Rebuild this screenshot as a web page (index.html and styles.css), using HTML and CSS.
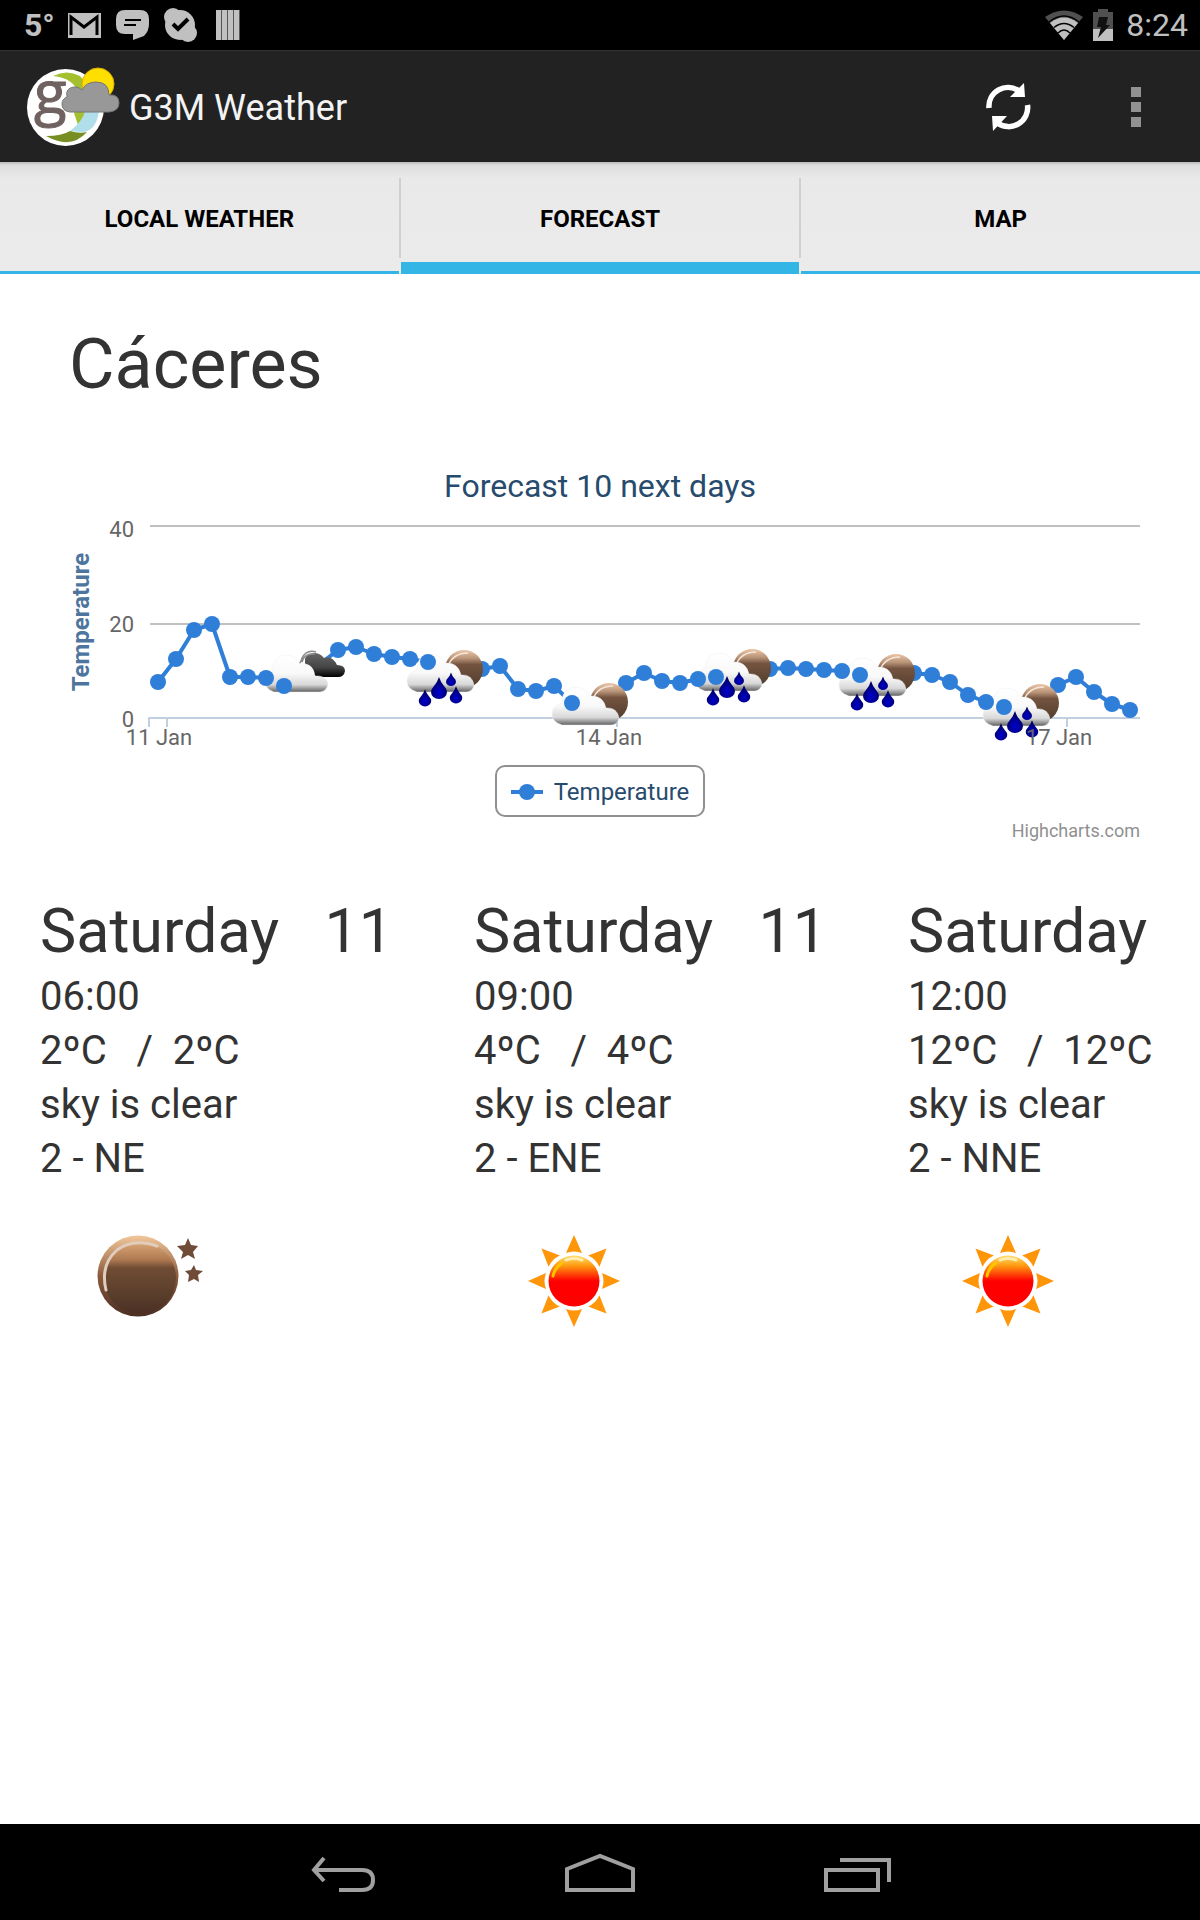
FILE: index.html
```html
<!DOCTYPE html>
<html lang="en">
<head>
<meta charset="utf-8">
<meta name="viewport" content="width=device-width, initial-scale=1">
<title>G3M Weather</title>
<link rel="stylesheet" href="styles.css">
</head>
<body>
<div class="status-bar">
  <div class="status-left">
    <span class="status-temp">5°</span>
    <svg class="status-icon" width="34" height="34" viewBox="0 0 34 34" aria-hidden="true">
      <path fill="#c0c0c0" d="M1 5h33v25H1z"/>
      <path fill="none" stroke="#000" stroke-width="3" d="M4 27V9l13 10L30 9v18"/>
    </svg>
    <svg class="status-icon" width="34" height="34" viewBox="0 0 34 34" aria-hidden="true">
      <path fill="#c0c0c0" d="M10 2h15q9 0 9 9v5q0 7-5 12l-11 4v-6h-8q-9 0-9-9v-6q0-9 9-9z"/>
      <path stroke="#000" stroke-width="2" d="M10 12h16M9 17h12"/>
    </svg>
    <svg class="status-icon" width="34" height="34" viewBox="0 0 34 34" aria-hidden="true">
      <circle cx="17" cy="17" r="15" fill="#c0c0c0"/>
      <circle cx="10" cy="9" r="9" fill="#c0c0c0"/>
      <circle cx="25" cy="25" r="9" fill="#c0c0c0"/>
      <path fill="none" stroke="#000" stroke-width="4" d="M10 16l5 5 10-10"/>
    </svg>
    <svg class="status-icon" width="34" height="34" viewBox="0 0 34 34" aria-hidden="true">
      <path fill="#c0c0c0" d="M5 2h24v30H5z"/>
      <path stroke="#555" stroke-width="1" d="M10.500 2v30M16.500 2v30M22.500 2v30M28.500 2v30"/>
    </svg>
  </div>
  <div class="status-right">
    <svg width="40" height="32" viewBox="0 0 40 32" aria-hidden="true">
      <path fill="#505050" d="M1 8Q20-5 39 8L20 31z"/>
      <path fill="#c0c0c0" d="M6 14q14-11 28 0L20 31z"/>
      <path fill="none" stroke="#000" stroke-width="1.500" d="M5 13q15-12 30 0M10 18.500q10-8 20 0M14 24q6-6 12 0"/>
    </svg>
    <svg width="22" height="32" viewBox="0 0 22 32" aria-hidden="true">
      <path fill="#505050" d="M6 0h10v3h5v17H1V3h5z"/>
      <path fill="#c0c0c0" d="M1 20h20v12H1z"/>
      <path fill="#111" d="M7 8h9l-2 8h4L6 29l3-11H5z"/>
    </svg>
    <span class="clock">8:24</span>
  </div>
</div>

<header class="action-bar">
  <svg class="logo" width="94" height="80" viewBox="26 66 94 80" aria-hidden="true">
    <circle cx="65.500" cy="106.500" r="38.500" fill="#fff"/>
    <path fill="#a4c02f" d="M53 75q14-7 27 0l14 17-5 20-11 12-4-12q9-8 6-18-6-17-27-19z"/>
    <path fill="#b1deeb" d="M85 110h14q-3 22-19 21l-10-1q13-10 15-20z"/>
    <path fill="#768e22" d="M46 135q16 0 24-5 9 3 17 1-16 18-41 4z"/>
    <text class="logo-letter" x="34" y="113">g</text>
    <circle cx="98" cy="83" r="16" fill="#ffdf00" stroke="#d9b000"/>
    <path fill="#989898" stroke="#777" d="M70 111q-8-1-8-8 0-5 5-7-2-9 7-10 4-1 8 3 4-8 14-8 13 0 13 13 10-1 10 8 0 8-10 9z"/>
  </svg>
  <h1 class="app-title">G3M Weather</h1>
  <div class="actions">
    <button class="action" type="button" aria-label="Refresh">
      <svg width="48" height="52" viewBox="984 81 48 52" aria-hidden="true">
        <path fill="none" stroke="#fff" stroke-width="5.500" d="M989 108a19 19 0 0 1 30-17M1027.500 105a19 19 0 0 1-30 18"/>
        <path fill="#fff" d="M1024 83l1 14h-15zM992 116h15l-14 15z"/>
      </svg>
    </button>
    <button class="action" type="button" aria-label="More options">
      <svg width="10" height="40" viewBox="0 0 10 40" aria-hidden="true"><path fill="#929292" d="M0 0h10v10H0zM0 15h10v10H0zM0 30h10v10H0z"/></svg>
    </button>
  </div>
</header>

<nav class="tabs">
  <a class="tab" href="#local">LOCAL WEATHER</a>
  <span class="tab-divider"></span>
  <a class="tab tab-selected" href="#forecast" aria-current="page">FORECAST</a>
  <span class="tab-divider"></span>
  <a class="tab" href="#map">MAP</a>
</nav>

<main class="content">
  <h2 class="city">Cáceres</h2>

  <section class="chart">
    <h3 class="chart-title">Forecast 10 next days</h3>
    <svg class="plot" viewBox="0 506 1200 246" role="img" aria-label="Temperature forecast">
      <defs>
        <linearGradient id="cloudFill" x1="0" y1="0" x2="0" y2="1">
          <stop offset="0" stop-color="#fff"/><stop offset=".5" stop-color="#f9f9f9"/>
          <stop offset=".8" stop-color="#d8d8d8"/><stop offset="1" stop-color="#606060"/>
        </linearGradient>
        <linearGradient id="darkFill" x1="0" y1="0" x2="0" y2="1">
          <stop offset="0" stop-color="#666"/><stop offset=".6" stop-color="#444"/><stop offset="1" stop-color="#000"/>
        </linearGradient>
        <linearGradient id="moonFill" x1="0" y1="0" x2="0" y2="1">
          <stop offset="0" stop-color="#edc6a8"/><stop offset=".22" stop-color="#b89478"/>
          <stop offset=".38" stop-color="#745440"/><stop offset="1" stop-color="#4f3b2c"/>
        </linearGradient>
        <radialGradient id="dropFill" cx=".5" cy=".7" r=".6">
          <stop offset="0" stop-color="#0000d0"/><stop offset="1" stop-color="#000060"/>
        </radialGradient>
        <path id="drop" fill="url(#dropFill)" d="M0-1q2 6 5 9 3 3 3 6a8 7 0 0 1-16 0q0-3 3-6 3-3 5-9z"/>
        <g id="moonCloud">
          <circle cx="58" cy="22" r="19" fill="url(#moonFill)"/>
          <path fill="none" stroke="#f5e6da" stroke-width="1.500" d="M42 19q5-13 20-13"/>
          <path fill="url(#cloudFill)" stroke="#eee" stroke-width=".5" d="M11 45Q1 42 1 34q0-8 10-11 0-16 14-16 9 0 14 9 13-1 16 12 11-1 13 10-1 6-7 7z"/>
        </g>
        <g id="rainCloud">
          <use href="#moonCloud" y="-1"/>
          <use href="#drop" transform="translate(33 30)"/>
          <use href="#drop" transform="translate(45 25) scale(.62)"/>
          <use href="#drop" transform="translate(19 42) scale(.78)"/>
          <use href="#drop" transform="translate(50 39) scale(.78)"/>
        </g>
        <g id="darkCloud">
          <path fill="url(#darkFill)" d="M48 27q-8-8-7-16 1-5 9-6 6 0 10 5 8-3 13 7 8 0 8 6-1 6-7 6H56z"/>
          <path fill="none" stroke="#888" stroke-width="1.500" d="M34 16q3-1 4-6 5-9 14-6M38 14q2-9 13-8"/>
          <path fill="url(#cloudFill)" stroke="#eee" stroke-width=".5" d="M10 44Q1 41 1 33q0-8 7-11 2-15 14-15 10 0 14 9 13-2 15 12 11-1 13 8-1 7-8 8z"/>
        </g>
      </defs>
      <path class="grid-line" d="M150 526h990M150 624h990"/>
      <path class="axis-line" d="M148 718h992M149 718v9M167 718v9M617 718v9M1067 718v9"/>
      <polyline class="series" points="158,682 176,659 194,630 212,624 230,677 248,677 266,678 284,686 302,672 320,664 338,650 356,647 374,654 392,657 410,659 428,662 446,673 464,672 482,669 500,666 518,689 536,691 554,686 572,703 590,706 608,699 626,683 644,673 662,681 680,683 698,679 716,677 734,672 752,670 770,669 788,668 806,669 824,670 842,671 860,675 878,677 896,674 914,673 932,675 950,682 968,695 986,702 1004,707 1022,708 1040,697 1058,685 1076,677 1094,692 1112,704 1130,710"/>
      <g class="points">
        <circle cx="1130" cy="710" r="8"/><circle cx="1112" cy="704" r="8"/><circle cx="1094" cy="692" r="8"/><circle cx="1076" cy="677" r="8"/><circle cx="1058" cy="685" r="8"/>
        <use href="#rainCloud" x="982" y="682"/>
        <circle cx="1004" cy="707" r="8"/><circle cx="986" cy="702" r="8"/><circle cx="968" cy="695" r="8"/><circle cx="950" cy="682" r="8"/><circle cx="932" cy="675" r="8"/><circle cx="914" cy="673" r="8"/>
        <use href="#rainCloud" x="838" y="652"/>
        <circle cx="860" cy="675" r="8"/><circle cx="842" cy="671" r="8"/><circle cx="824" cy="670" r="8"/><circle cx="806" cy="669" r="8"/><circle cx="788" cy="668" r="8"/><circle cx="770" cy="669" r="8"/>
        <use href="#rainCloud" x="694" y="647"/>
        <circle cx="716" cy="677" r="8"/><circle cx="698" cy="679" r="8"/><circle cx="680" cy="683" r="8"/><circle cx="662" cy="681" r="8"/><circle cx="644" cy="673" r="8"/><circle cx="626" cy="683" r="8"/>
        <use href="#moonCloud" x="551" y="680"/>
        <circle cx="572" cy="703" r="8"/><circle cx="554" cy="686" r="8"/><circle cx="536" cy="691" r="8"/><circle cx="518" cy="689" r="8"/><circle cx="500" cy="666" r="8"/><circle cx="482" cy="669" r="8"/>
        <use href="#rainCloud" x="406" y="648"/>
        <circle cx="428" cy="662" r="8"/><circle cx="410" cy="659" r="8"/><circle cx="392" cy="657" r="8"/><circle cx="374" cy="654" r="8"/><circle cx="356" cy="647" r="8"/><circle cx="338" cy="650" r="8"/>
        <use href="#darkCloud" x="264" y="648"/>
        <circle cx="284" cy="686" r="8"/><circle cx="266" cy="678" r="8"/><circle cx="248" cy="677" r="8"/><circle cx="230" cy="677" r="8"/><circle cx="212" cy="624" r="8"/><circle cx="194" cy="630" r="8"/><circle cx="176" cy="659" r="8"/><circle cx="158" cy="682" r="8"/>
      </g>
      <g class="axis-label y-label">
        <text x="134" y="537">40</text><text x="134" y="632">20</text><text x="134" y="727">0</text>
      </g>
      <g class="axis-label x-label">
        <text x="159" y="745">11 Jan</text><text x="609" y="745">14 Jan</text><text x="1059" y="745">17 Jan</text>
      </g>
      <text class="axis-title" transform="translate(89 622) rotate(-90)">Temperature</text>
    </svg>
    <button class="legend" type="button">
      <svg width="32" height="16" viewBox="0 0 32 16" aria-hidden="true"><path stroke="#2f7ed8" stroke-width="4" d="M0 8h32"/><circle cx="16" cy="8" r="8" fill="#2f7ed8"/></svg>
      Temperature
    </button>
    <a class="credits" href="#highcharts">Highcharts.com</a>
  </section>

  <section class="days">
    <article class="day">
      <h3 class="day-name">Saturday   11</h3>
      <p>06:00</p><p>2ºC   /  2ºC</p><p>sky is clear</p><p>2 - NE</p>
      <svg class="day-icon" viewBox="0 0 128 128" role="img" aria-label="Clear night">
        <defs>
          <linearGradient id="nightFill" x1="0" y1="0" x2="0" y2="1">
            <stop offset="0" stop-color="#dba878"/><stop offset=".25" stop-color="#ad7850"/>
            <stop offset=".36" stop-color="#704c34"/><stop offset=".75" stop-color="#583d2b"/><stop offset="1" stop-color="#4b2f23"/>
          </linearGradient>
          <linearGradient id="nightRim" x1="0" y1="0" x2="0" y2="1">
            <stop offset="0" stop-color="#f3c79b"/><stop offset=".5" stop-color="#8a5a3c"/><stop offset="1" stop-color="#4b2f23"/>
          </linearGradient>
        </defs>
        <circle cx="62" cy="60" r="40.500" fill="url(#nightRim)"/>
        <circle cx="64" cy="62" r="36" fill="url(#nightFill)"/>
        <path class="moon-shine" d="M30 74Q24 49 41 34 57 22 81 30"/>
        <path fill="#704c38" d="M112 22l3 7 7 1-5 6 2 7-7-4-7 4 2-7-6-6 8-1zM118 49l2 5 7 1-5 4 1 7-5-3-6 3 1-7-4-4 6-1z"/>
      </svg>
    </article>
    <article class="day">
      <h3 class="day-name">Saturday   11</h3>
      <p>09:00</p><p>4ºC   /  4ºC</p><p>sky is clear</p><p>2 - ENE</p>
      <svg class="day-icon" viewBox="0 0 128 128" role="img" aria-label="Sunny">
        <defs>
          <linearGradient id="sunFill" x1="0" y1="0" x2="0" y2="1">
            <stop offset="0" stop-color="#ffe070"/><stop offset=".2" stop-color="#ff9a10"/>
            <stop offset=".5" stop-color="#f00"/><stop offset="1" stop-color="#f00"/>
          </linearGradient>
          <path id="ray" fill="#ff960a" d="M64 19l8 18q-8-3-16 0z"/>
          <g id="sun">
            <use href="#ray"/><use href="#ray" transform="rotate(45 64 65)"/><use href="#ray" transform="rotate(90 64 65)"/><use href="#ray" transform="rotate(135 64 65)"/>
            <use href="#ray" transform="rotate(180 64 65)"/><use href="#ray" transform="rotate(225 64 65)"/><use href="#ray" transform="rotate(270 64 65)"/><use href="#ray" transform="rotate(315 64 65)"/>
            <circle cx="64" cy="65" r="25.500" fill="url(#sunFill)"/>
            <path fill="none" stroke="#ffc400" stroke-width="3" stroke-linecap="round" d="M43 60q2-9 9-13"/>
            <path fill="none" stroke="#ffedb0" stroke-width="3" stroke-linecap="round" d="M56 44q8-3 16 0"/>
          </g>
        </defs>
        <use href="#sun"/>
      </svg>
    </article>
    <article class="day">
      <h3 class="day-name">Saturday   11</h3>
      <p>12:00</p><p>12ºC   /  12ºC</p><p>sky is clear</p><p>2 - NNE</p>
      <svg class="day-icon" viewBox="0 0 128 128" role="img" aria-label="Sunny"><use href="#sun"/></svg>
    </article>
  </section>
</main>

<footer class="nav-bar">
  <button class="nav-button" type="button" aria-label="Back">
    <svg width="72" height="48" viewBox="308 1850 72 48" aria-hidden="true"><path d="M325 1858l-10 12 10 11M315 1870h48q11 0 11 10t-11 10h-23"/></svg>
  </button>
  <button class="nav-button" type="button" aria-label="Home">
    <svg width="72" height="48" viewBox="564 1850 72 48" aria-hidden="true"><path d="M567 1890v-21l33-13 33 13v21z"/></svg>
  </button>
  <button class="nav-button" type="button" aria-label="Recent apps">
    <svg width="72" height="48" viewBox="822 1850 72 48" aria-hidden="true"><path d="M827 1870h52v20h-52zM841 1860h49v22"/></svg>
  </button>
</footer>
</body>
</html>
```

FILE: styles.css
```css
* { box-sizing: border-box; }

body {
  margin: 0;
  min-height: 100vh;
  display: flex;
  flex-direction: column;
  background: #fff;
  color: #333;
  font-family: Roboto, "Liberation Sans", sans-serif;
}

h1, h2, h3, p { margin: 0; font-weight: 400; }
svg { display: block; }
button {
  padding: 0;
  border: 0;
  background: none;
  color: inherit;
  font: inherit;
}
a { text-decoration: none; }

/* System status bar */
.status-bar {
  height: 50px;
  padding: 0 12px 0 24px;
  display: flex;
  align-items: center;
  justify-content: space-between;
  background: #000;
  color: #c0c0c0;
}
.status-left { display: flex; align-items: center; gap: 14px; }
.status-temp { width: 29px; font-size: 32px; font-weight: 700; white-space: nowrap; }
.status-right { display: flex; align-items: center; gap: 8px; }
.clock { margin-left: 4px; font-size: 32px; }

/* Action bar */
.action-bar {
  height: 112px;
  padding: 0 24px 0 26px;
  display: flex;
  align-items: center;
  gap: 9px;
  background: #222;
  border-top: 1px solid #333;
  color: #f3f3f3;
}
.logo { overflow: visible; }
.logo-letter {
  font-family: "Open Sans", sans-serif;
  font-size: 60px;
  font-weight: 400;
  fill: #6f6260;
  stroke: #6f6260;
  stroke-width: 1;
}
.app-title { padding-top: 2px; font-size: 36px; }
.actions { margin-left: auto; display: flex; }
.action {
  width: 128px;
  height: 110px;
  display: flex;
  align-items: center;
  justify-content: center;
}
.action + .action { width: 80px; margin-left: 24px; }

/* Tabs */
.tabs {
  height: 112px;
  display: flex;
  background: linear-gradient(#b8b8b8, #dedede 3px, #e9e9e9 16px, #ebebeb);
}
.tab {
  flex: 1;
  padding-top: 2px;
  display: flex;
  align-items: center;
  justify-content: center;
  color: #000;
  font-size: 24px;
  font-weight: 700;
  box-shadow: inset 0 -3px #33b5e5;
}
.tab-selected { box-shadow: inset 0 -12px #33b5e5; }
.tab-divider { width: 2px; margin: 16px 0; background: #d0d0d0; }

/* Forecast */
.content { flex: 1; padding-top: 48px; }
.city { margin-left: 69px; font-size: 70px; line-height: 84px; }
.chart { margin-top: 60px; display: flex; flex-direction: column; }
.chart-title {
  color: #274b6d;
  font-size: 32px;
  line-height: 40px;
  text-align: center;
}
.plot { width: 100%; }
.grid-line { stroke: #c0c0c0; stroke-width: 2; }
.axis-line { fill: none; stroke: #c0d0e0; stroke-width: 2; }
.series { fill: none; stroke: #2f7ed8; stroke-width: 4; stroke-linejoin: round; }
.points { fill: #2f7ed8; }
.axis-label { fill: #666; font-size: 22px; }
.y-label { text-anchor: end; }
.x-label { text-anchor: middle; }
.axis-title { fill: #4d759e; font-size: 24px; font-weight: 700; text-anchor: middle; }
.legend {
  align-self: center;
  height: 52px;
  margin-top: 13px;
  padding: 2px 14px 0;
  display: flex;
  align-items: center;
  gap: 11px;
  border: 2px solid #909090;
  border-radius: 10px;
  color: #274b6d;
  font-size: 24px;
}
.credits {
  align-self: flex-end;
  margin: 2px 60px 0 0;
  color: #909090;
  font-size: 18px;
  line-height: 24px;
}

.days {
  margin: 52px 40px 0;
  display: flex;
  overflow: hidden;
}
.day {
  flex: 0 0 38.75%;
  font-size: 40px;
  line-height: 54px;
}
.day-name, .day p { white-space: pre; }
.day-name { margin-bottom: 3px; font-size: 61px; line-height: 72px; }
.day-icon { width: 128px; height: 128px; margin: 30px 0 0 36px; overflow: visible; }
.moon-shine { fill: none; stroke: #e2cdbd; stroke-width: 3; stroke-linecap: round; }

/* System navigation bar */
.nav-bar {
  height: 96px;
  padding-top: 3px;
  display: flex;
  align-items: center;
  justify-content: center;
  gap: 56px;
  background: #000;
}
.nav-button {
  width: 201px;
  height: 93px;
  display: flex;
  align-items: center;
  justify-content: center;
}
.nav-button path { fill: none; stroke: #a0a0a0; stroke-width: 4; }
```
